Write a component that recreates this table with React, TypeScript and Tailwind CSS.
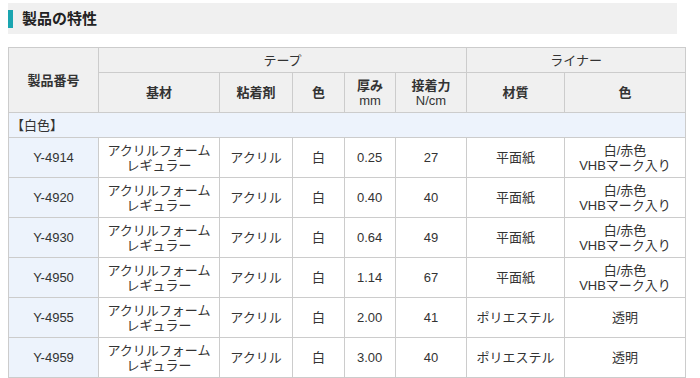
import React from "react";

const rows = [
  { id: "Y-4914", t: "0.25", f: "27", m: "平面紙", c: ["白/赤色", "VHBマーク入り"] },
  { id: "Y-4920", t: "0.40", f: "40", m: "平面紙", c: ["白/赤色", "VHBマーク入り"] },
  { id: "Y-4930", t: "0.64", f: "49", m: "平面紙", c: ["白/赤色", "VHBマーク入り"] },
  { id: "Y-4950", t: "1.14", f: "67", m: "平面紙", c: ["白/赤色", "VHBマーク入り"] },
  { id: "Y-4955", t: "2.00", f: "41", m: "ポリエステル", c: ["透明"] },
  { id: "Y-4959", t: "3.00", f: "40", m: "ポリエステル", c: ["透明"] },
];

export default function App() {
  const font = { fontFamily: '"Liberation Sans", "Noto Sans CJK JP", sans-serif' };
  const th = "border border-[#cccccc] bg-[#f0f0f0] font-bold text-center align-middle p-0";
  const td = "border border-[#cccccc] text-center align-middle p-0 bg-white";
  return (
    <div className="w-[700px] h-[378px] bg-white overflow-hidden text-[#333333]" style={font}>
      <div className="pt-[3px] px-[8px] w-[685px]">
        <div className="h-[31px] bg-[#f0f0f0] flex items-center">
          <div className="w-[5px] h-[18px] bg-[#1aa5b0]" />
          <div className="ml-[9px] text-[15px] font-bold text-[#222222] leading-none">製品の特性</div>
        </div>
      </div>
      <div className="pl-[8px] pt-[13px]">
        <table className="table-fixed border-collapse text-[13px] leading-[15px] w-[677px]">
          <colgroup>
            <col className="w-[90px]" />
            <col className="w-[121px]" />
            <col className="w-[73px]" />
            <col className="w-[52px]" />
            <col className="w-[51px]" />
            <col className="w-[71px]" />
            <col className="w-[98px]" />
            <col className="w-[121px]" />
          </colgroup>
          <thead>
            <tr className="h-[25px]">
              <th rowSpan={2} className={th}>製品番号</th>
              <th colSpan={5} className={th + " font-normal"}>テープ</th>
              <th colSpan={2} className={th + " font-normal"}>ライナー</th>
            </tr>
            <tr className="h-[40px]">
              <th className={th}>基材</th>
              <th className={th}>粘着剤</th>
              <th className={th}>色</th>
              <th className={th}>
                <div>厚み</div>
                <div className="font-normal">mm</div>
              </th>
              <th className={th}>
                <div>接着力</div>
                <div className="font-normal">N/cm</div>
              </th>
              <th className={th}>材質</th>
              <th className={th}>色</th>
            </tr>
          </thead>
          <tbody>
            <tr className="h-[25px]">
              <td colSpan={8} className="border border-[#cccccc] bg-[#edf3fc] text-left pl-[2px] p-0 align-middle">【白色】</td>
            </tr>
            {rows.map((r) => (
              <tr key={r.id} className="h-[40px]">
                <td className={td + " !bg-[#edf3fc]"}>{r.id}</td>
                <td className={td}>
                  <div>アクリルフォーム</div>
                  <div>レギュラー</div>
                </td>
                <td className={td}>アクリル</td>
                <td className={td}>白</td>
                <td className={td + " text-left pl-[12px]"}>{r.t}</td>
                <td className={td}>{r.f}</td>
                <td className={td}>{r.m}</td>
                <td className={td}>
                  {r.c.map((x) => (
                    <div key={x}>{x}</div>
                  ))}
                </td>
              </tr>
            ))}
          </tbody>
        </table>
      </div>
    </div>
  );
}
